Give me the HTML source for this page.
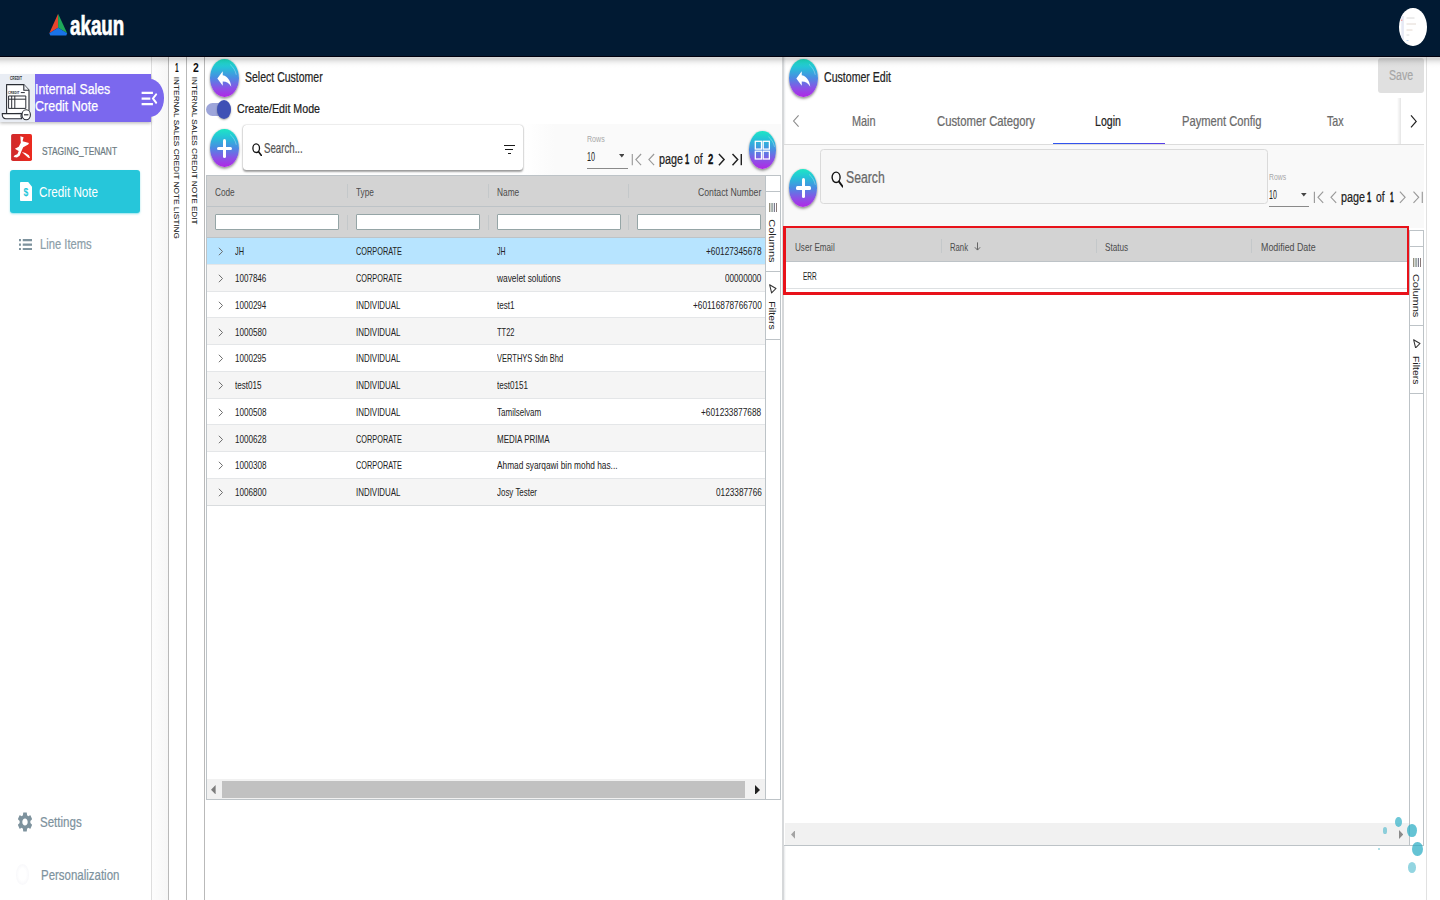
<!DOCTYPE html>
<html lang="en"><head><meta charset="utf-8"><title>akaun - Internal Sales Credit Note</title>
<style>
html,body{margin:0;padding:0;}
body{width:1440px;height:900px;overflow:hidden;background:#fff;position:relative;
 font-family:"Liberation Sans",sans-serif;}
#app{position:absolute;left:0;top:0;width:1440px;height:900px;overflow:hidden;}
#app div,#app svg,#app span.t{position:absolute;}
span.t{white-space:nowrap;line-height:1;transform-origin:0 0;display:block;}
</style></head><body><div id="app">

<div style="left:151.5px;top:56px;width:17px;height:844px;background:linear-gradient(90deg,#fdfdfd,#f6f6f6);"></div>
<div style="left:151.2px;top:56px;width:1px;height:844px;background:#dedede;"></div>
<div style="left:168px;top:56px;width:1.1px;height:844px;background:#b9b9b9;"></div>
<div style="left:186px;top:56px;width:1.1px;height:844px;background:#b9b9b9;"></div>
<div style="left:204.2px;top:56px;width:1.1px;height:844px;background:#b9b9b9;"></div>
<div style="left:781.8px;top:56px;width:2.6px;height:844px;background:#d6d8da;"></div>
<div style="left:784.3px;top:56px;width:1.5px;height:844px;background:linear-gradient(90deg,#e8eaec,#fff);"></div>
<div style="left:1425.5px;top:56px;width:1.7px;height:844px;background:#e1e1e1;"></div>
<div style="left:0px;top:74.3px;width:34.5px;height:47.9px;background:#e9edf4;"></div>
<div style="left:34.5px;top:74.3px;width:116.3px;height:47.9px;background:#7b68ee;box-shadow:0 1.5px 3px rgba(0,0,0,.25);"></div>
<div style="left:0px;top:74.3px;width:34.5px;height:47.9px;background:#e9edf4;box-shadow:0 1.5px 3px rgba(0,0,0,.25);"></div>
<div style="left:135.8px;top:79.3px;width:28px;height:37.4px;background:#7b68ee;border-radius:50%;"></div>
<div style="left:34.5px;top:74.3px;width:116.3px;height:47.9px;background:#7b68ee;"></div>
<span class="t" style="left:34.8px;top:81px;font-size:14.75px;line-height:16px;color:#fff;transform:scaleX(0.8337);-webkit-text-stroke:.25px #fff;">Internal Sales</span>
<span class="t" style="left:34.8px;top:98px;font-size:14.75px;line-height:16px;color:#fff;transform:scaleX(0.8471);-webkit-text-stroke:.25px #fff;">Credit Note</span>
<svg style="left:139.4px;top:84.9px;" width="20.9" height="27.1" viewBox="0 0 24 24" preserveAspectRatio="none"><path fill="#fff" d="M3 18h13v-2H3v2zm0-5h10v-2H3v2zm0-7v2h13V6H3zm18 9.59L17.42 12 21 8.41 19.59 7l-5 5 5 5L21 15.59z"/></svg>
<svg style="left:0px;top:74.3px;" width="34.5" height="47.9" viewBox="0 0 34.5 47.9" preserveAspectRatio="none">
<g fill="none" stroke="#2a2d34" stroke-width="1.1" stroke-linejoin="round">
<path d="M6.6 40V10.6h17.2l5.2 5.6v20.6" fill="#fff"/>
<path d="M23.8 10.6v5.6H29" fill="#eef1f6"/>
<path d="M2.2 39.6h19.4c-.9 1.7-.9 3.5 0 5.2H5.8c-2.4 0-3.6-2.6-3.6-5.2z" fill="#fff"/>
<path d="M8.6 22h17.2v12.4H8.6zM8.6 25.2h17.2M11.7 22v12.4M14.8 22v12.4" stroke-width="1"/>
<ellipse cx="26.2" cy="40.8" rx="4.2" ry="5" fill="#fff"/>
<path d="M24 40.8h4.4" stroke-width="1.2"/>
</g>
<text x="10" y="6" font-size="4.6" font-weight="700" fill="#2a2d34" textLength="12" lengthAdjust="spacingAndGlyphs">CREDIT</text>
<text x="8" y="19.6" font-size="4.4" font-weight="700" fill="#2a2d34" textLength="11.4" lengthAdjust="spacingAndGlyphs">CREDIT</text>
<path d="M20.8 18.6h4" stroke="#2a2d34" stroke-width="1"/>
</svg>
<svg style="left:4px;top:128px;" width="40" height="40" viewBox="0 0 900 900" preserveAspectRatio="none">
<defs><linearGradient id="rg" x1="0" x2="1" y1="0" y2="0"><stop offset="0" stop-color="#cf2a2c"/><stop offset="1" stop-color="#ec2a1e"/></linearGradient></defs>
<rect x="160" y="135" width="470" height="610" rx="40" ry="40" fill="url(#rg)"/>
<path fill="#fff" d="M368 185 L440 208 L418 300 L562 338 L545 372 L432 432 L392 522 L352 622 L292 662 L215 650 L240 612 L300 590 L332 520 L300 500 L245 468 L332 420 L378 330 Z"/>
<path fill="#fff" d="M402 540 L482 560 L560 612 L586 676 L545 670 L470 600 Z"/>
</svg>
<span class="t" style="left:41.7px;top:144px;font-size:11.75px;line-height:13px;color:#6c7a82;transform:scaleX(0.7106);-webkit-text-stroke:0.22px;">STAGING_TENANT</span>
<div style="left:10px;top:170.3px;width:129.7px;height:42.7px;background:#26c6da;border-radius:3px;box-shadow:0 1px 2px rgba(38,198,218,.5);"></div>
<svg style="left:19.6px;top:182px;" width="12.2" height="18.9" viewBox="0 0 12.2 18.9" preserveAspectRatio="none">
<path fill="#fff" d="M.9 0H8.200L12.200 5.100V18a.9.9 0 0 1-.9.900H.900A.9.900 0 0 1 0 18V.900A.9.900 0 0 1 .900 0z"/>
<text x="3.600" y="14.100" font-size="10.500" font-weight="700" fill="#26c6da" font-family="Liberation Sans, sans-serif" textLength="4.800" lengthAdjust="spacingAndGlyphs">$</text>
</svg>
<span class="t" style="left:39.2px;top:184px;font-size:14.25px;line-height:16px;color:#fff;transform:scaleX(0.8200);">Credit Note</span>
<svg style="left:18.7px;top:238.7px;" width="13.5" height="11.3" viewBox="0 0 18 12" preserveAspectRatio="none">
<g fill="#7d929d"><rect x="0" y="0" width="2.6" height="2.4"/><rect x="0" y="4.8" width="2.6" height="2.4"/><rect x="0" y="9.6" width="2.6" height="2.4"/>
<rect x="5" y="0" width="13" height="2.4"/><rect x="5" y="4.8" width="13" height="2.4"/><rect x="5" y="9.6" width="13" height="2.4"/></g></svg>
<span class="t" style="left:39.5px;top:236px;font-size:14.75px;line-height:16px;color:#8c9ea8;transform:scaleX(0.7598);-webkit-text-stroke:0.22px;">Line Items</span>
<svg style="left:16.4px;top:809.9px;" width="18" height="24" viewBox="0 0 24 24" preserveAspectRatio="none"><path fill="#7d929d" d="M19.14 12.94c.04-.3.06-.61.06-.94 0-.32-.02-.64-.07-.94l2.03-1.58c.18-.14.23-.41.12-.61l-1.92-3.32c-.12-.22-.37-.29-.59-.22l-2.39.96c-.5-.38-1.030-.7-1.620-.94l-.36-2.540c-.04-.24-.24-.41-.48-.41h-3.840c-.24 0-.43.17-.47.41l-.36 2.540c-.59.24-1.130.57-1.620.94l-2.390-.96c-.22-.08-.47 0-.59.22L2.740 8.870c-.12.21-.08.47.12.61l2.030 1.580c-.05.3-.09.63-.09.94s.02.64.07.94l-2.030 1.580c-.18.14-.23.41-.12.61l1.920 3.320c.12.22.37.29.59.22l2.390-.96c.5.38 1.030.7 1.620.94l.36 2.540c.05.24.24.41.48.41h3.840c.24 0 .44-.17.47-.41l.36-2.540c.59-.24 1.130-.56 1.620-.94l2.390.96c.22.08.47 0 .59-.22l1.920-3.320c.12-.22.070-.47-.12-.61l-2.010-1.580zM12 15.600c-1.980 0-3.600-1.620-3.600-3.600s1.620-3.600 3.600-3.600 3.600 1.620 3.600 3.600-1.620 3.600-3.600 3.600z"/></svg>
<span class="t" style="left:39.5px;top:813px;font-size:15px;line-height:17px;color:#7d929d;transform:scaleX(0.7694);-webkit-text-stroke:0.22px;">Settings</span>
<div style="left:15.8px;top:864px;width:13.2px;height:21px;border-radius:50%;background:radial-gradient(ellipse at center,#fff 40%,#f1f1f6 100%);"></div>
<span class="t" style="left:40.8px;top:866px;font-size:15px;line-height:17px;color:#7d929d;transform:scaleX(0.7645);-webkit-text-stroke:0.22px;">Personalization</span>
<span class="t" style="left:175px;top:60px;font-size:12.75px;line-height:15px;color:#111;font-weight:700;transform:scaleX(0.5219);">1</span>
<span class="t" style="left:192.5px;top:60px;font-size:12.75px;line-height:15px;color:#111;font-weight:700;transform:scaleX(0.8182);">2</span>
<span class="t" style="left:0;top:0;font-size:11px;color:#1c1c1c;transform:translate(173.7px,76.8px) rotate(90deg) scale(0.7517,0.7267) translate(-0px,-9.32px);-webkit-text-stroke:.1px;">INTERNAL SALES CREDIT NOTE LISTING</span>
<span class="t" style="left:0;top:0;font-size:11px;color:#1c1c1c;transform:translate(191.7px,76.8px) rotate(90deg) scale(0.7463,0.7267) translate(-0px,-9.32px);-webkit-text-stroke:.1px;">INTERNAL SALES CREDIT NOTE EDIT</span>
<div style="left:210.4px;top:59px;width:28.4px;height:38px;border-radius:50%;background:linear-gradient(180deg,#1ee6c4 0%,#25c3d8 22%,#4a8be2 50%,#8a52e6 76%,#b028e6 100%);box-shadow:0 2px 2.5px rgba(0,0,0,.35),0 0 2px rgba(0,0,0,.2);"></div>
<svg style="left:210.4px;top:59px" width="28.4" height="38" viewBox="0 0 28.4 38"><path d="M20.300 5.600C23.400 8.200 25.400 11.600 26.200 15.400" fill="none" stroke="rgba(255,255,255,.38)" stroke-width=".8" stroke-linecap="round"/></svg>
<svg style="left:215.2px;top:65.6px;" width="18.6" height="24.8" viewBox="0 0 24 24" preserveAspectRatio="none"><path fill="#fff" d="M10 9V5l-7 7 7 7v-4.100c5 0 8.500 1.600 11 5.100-1-5-4-10-11-11z"/></svg>
<span class="t" style="left:245.3px;top:69px;font-size:14.5px;line-height:16px;color:#222;transform:scaleX(0.7249);-webkit-text-stroke:0.22px;">Select Customer</span>
<div style="left:205.8px;top:103.3px;width:24.8px;height:12.9px;background:#9da5da;border-radius:7px/7px;"></div>
<div style="left:217px;top:100px;width:14.3px;height:19.4px;background:#3f51b5;border-radius:50%;box-shadow:0 1px 2px rgba(0,0,0,.35);"></div>
<span class="t" style="left:237px;top:101px;font-size:13.25px;line-height:15px;color:#1b1b1b;transform:scaleX(0.8050);-webkit-text-stroke:0.22px;">Create/Edit Mode</span>
<div style="left:524px;top:124px;width:257.2px;height:51px;background:linear-gradient(90deg,#fff,#fafafa 12%);"></div>
<div style="left:210.4px;top:129.4px;width:28.4px;height:38px;border-radius:50%;background:linear-gradient(180deg,#1ee6c4 0%,#25c3d8 22%,#4a8be2 50%,#8a52e6 76%,#b028e6 100%);box-shadow:0 2px 2.5px rgba(0,0,0,.35),0 0 2px rgba(0,0,0,.2);"></div>
<svg style="left:210.4px;top:129.4px" width="28.4" height="38" viewBox="0 0 28.4 38"><path d="M20.300 5.600C23.400 8.200 25.400 11.600 26.200 15.400" fill="none" stroke="rgba(255,255,255,.38)" stroke-width=".8" stroke-linecap="round"/></svg>
<div style="left:216.9px;top:146.8px;width:15.1px;height:3.4px;background:#fff;border-radius:1.5px;"></div>
<div style="left:222.9px;top:138.7px;width:3.1px;height:19.3px;background:#fff;border-radius:1.5px;"></div>
<div style="left:242.8px;top:125.2px;width:280.5px;height:44.6px;background:#fff;border-radius:3.5px;box-shadow:0 1.2px 2px rgba(0,0,0,.36),0 0 1.5px rgba(0,0,0,.28);"></div>
<svg style="left:251.7px;top:142.6px;" width="10.5" height="13.8" viewBox="0 0 10.5 13.8" preserveAspectRatio="none"><ellipse cx="4.2" cy="5.2" rx="3.3" ry="4.3" fill="none" stroke="#111" stroke-width="1.3"/><path d="M6.4 8.600L9.800 13" stroke="#111" stroke-width="1.6" stroke-linecap="round"/></svg>
<span class="t" style="left:263.8px;top:141px;font-size:13.75px;line-height:15px;color:#555;transform:scaleX(0.7033);-webkit-text-stroke:0.22px;">Search...</span>
<div style="left:503.9px;top:144.9px;width:11.1px;height:1.3px;background:#1a1a1a;"></div>
<div style="left:505.3px;top:148.9px;width:7.7px;height:1.3px;background:#1a1a1a;"></div>
<div style="left:507.9px;top:152.9px;width:3.1px;height:1.3px;background:#1a1a1a;"></div>
<span class="t" style="left:587px;top:134px;font-size:9px;line-height:10px;color:#a8a8a8;transform:scaleX(0.7864);">Rows</span>
<span class="t" style="left:587.4px;top:149px;font-size:13.5px;line-height:15px;color:#222;transform:scaleX(0.5329);">10</span>
<svg style="left:618.7px;top:154.3px;" width="5.6" height="3.5" viewBox="0 0 10 5" preserveAspectRatio="none"><path d="M0 0h10L5 5z" fill="#444"/></svg>
<div style="left:587px;top:168px;width:40.5px;height:1px;background:#8a8a8a;"></div>
<svg style="left:0;top:0" width="1440" height="900" viewBox="0 0 1440 900"><path d="M632.3 154V165.2" stroke="#9a9a9a" stroke-width="1.15"/><polyline points="641.1,154 635.9,159.6 641.1,165.2" fill="none" stroke="#9a9a9a" stroke-width="1.15"/><polyline points="654.1,154 648.9,159.6 654.1,165.2" fill="none" stroke="#9a9a9a" stroke-width="1.15"/><polyline points="718.9,154 724.1,159.6 718.9,165.2" fill="none" stroke="#222" stroke-width="1.45"/><polyline points="732.5,154 737.7,159.6 732.5,165.2" fill="none" stroke="#222" stroke-width="1.45"/><path d="M741.3 154V165.2" stroke="#222" stroke-width="1.45"/></svg>
<span class="t" style="left:658.8px;top:151px;font-size:14.75px;line-height:16px;color:#222;transform:scaleX(0.7313);-webkit-text-stroke:0.22px;">page</span>
<span class="t" style="left:685.1px;top:150px;font-size:15.5px;line-height:17px;color:#111;font-weight:700;transform:scaleX(0.4874);-webkit-text-stroke:0.35px;">1</span>
<span class="t" style="left:694.2px;top:151px;font-size:14.75px;line-height:16px;color:#222;transform:scaleX(0.6974);-webkit-text-stroke:0.22px;">of</span>
<span class="t" style="left:707.5px;top:150px;font-size:15.5px;line-height:17px;color:#111;font-weight:700;transform:scaleX(0.6150);-webkit-text-stroke:0.3px;">2</span>
<div style="left:748.5px;top:131.1px;width:27.6px;height:38px;border-radius:50%;background:linear-gradient(180deg,#1ee6c4 0%,#25c3d8 22%,#4a8be2 50%,#8a52e6 76%,#b028e6 100%);box-shadow:0 2px 2.5px rgba(0,0,0,.35),0 0 2px rgba(0,0,0,.2);"></div>
<svg style="left:748.5px;top:131.1px" width="27.6" height="38" viewBox="0 0 28.4 38"><path d="M20.300 5.600C23.400 8.200 25.400 11.600 26.200 15.400" fill="none" stroke="rgba(255,255,255,.38)" stroke-width=".8" stroke-linecap="round"/></svg>
<svg style="left:754.2px;top:140.4px;" width="16.2" height="20.3" viewBox="0 0 16.2 20.3" preserveAspectRatio="none"><g fill="none" stroke="#fff" stroke-width="1.3"><rect x="1.3" y="1.3" width="6.2" height="7.8"/><rect x="9.2" y="1.3" width="6.2" height="7.8"/><rect x="1.300" y="11.2" width="6.2" height="7.8"/><rect x="9.2" y="11.2" width="6.2" height="7.8"/></g></svg>
<div style="left:205.8px;top:174.6px;width:575px;height:625.8px;background:#fff;border:1px solid #bdc3c7;box-sizing:border-box;"></div>
<div style="left:206.8px;top:175.5px;width:558.8px;height:61.9px;background:#d3d3d3;"></div>
<div style="left:206.8px;top:205.6px;width:558.8px;height:1px;background:#bdc3c7;"></div>
<div style="left:206.8px;top:236.6px;width:558.8px;height:1px;background:#bdc3c7;"></div>
<div style="left:765.2px;top:175px;width:1px;height:625px;background:#bdc3c7;"></div>
<div style="left:347px;top:184.2px;width:1px;height:14.2px;background:#c4c8ca;"></div>
<div style="left:347px;top:215.4px;width:1px;height:14.2px;background:#c4c8ca;"></div>
<div style="left:487.5px;top:184.2px;width:1px;height:14.2px;background:#c4c8ca;"></div>
<div style="left:487.5px;top:215.4px;width:1px;height:14.2px;background:#c4c8ca;"></div>
<div style="left:628px;top:184.2px;width:1px;height:14.2px;background:#c4c8ca;"></div>
<div style="left:628px;top:215.4px;width:1px;height:14.2px;background:#c4c8ca;"></div>
<span class="t" style="left:215.3px;top:186px;font-size:11.5px;line-height:12px;color:#4c4c4c;transform:scaleX(0.7165);">Code</span>
<span class="t" style="left:356.3px;top:186px;font-size:11.5px;line-height:12px;color:#4c4c4c;transform:scaleX(0.7180);">Type</span>
<span class="t" style="left:497px;top:186px;font-size:11.5px;line-height:12px;color:#4c4c4c;transform:scaleX(0.7236);">Name</span>
<span class="t" style="left:698px;top:186px;font-size:11.5px;line-height:12px;color:#4c4c4c;transform:scaleX(0.7560);">Contact Number</span>
<div style="left:215.3px;top:214.2px;width:123.9px;height:16.2px;background:#fff;border:1px solid #95a5a6;box-sizing:border-box;border-radius:1px;"></div>
<div style="left:355.8px;top:214.2px;width:124.2px;height:16.2px;background:#fff;border:1px solid #95a5a6;box-sizing:border-box;border-radius:1px;"></div>
<div style="left:496.8px;top:214.2px;width:123.9px;height:16.2px;background:#fff;border:1px solid #95a5a6;box-sizing:border-box;border-radius:1px;"></div>
<div style="left:637.2px;top:214.2px;width:124.1px;height:16.2px;background:#fff;border:1px solid #95a5a6;box-sizing:border-box;border-radius:1px;"></div>
<div style="left:206.8px;top:237.5px;width:558.4px;height:26.78px;background:#b7e4ff;"></div>
<svg style="left:218.3px;top:247.1px" width="6" height="9" viewBox="0 0 6 9"><polyline points="0.9,0.800 4.5,4.500 0.9,8.200" fill="none" stroke="#666" stroke-width="0.95"/></svg>
<span class="t" style="left:234.7px;top:245px;font-size:11.5px;line-height:12px;color:#222;transform:scaleX(0.6404);">JH</span>
<span class="t" style="left:356.3px;top:245px;font-size:11.5px;line-height:12px;color:#222;transform:scaleX(0.6376);">CORPORATE</span>
<span class="t" style="left:497px;top:245px;font-size:11.5px;line-height:12px;color:#222;transform:scaleX(0.6049);">JH</span>
<span class="t" style="left:705.8px;top:245px;font-size:11.5px;line-height:12px;color:#222;transform:scaleX(0.7201);">+60127345678</span>
<div style="left:206.8px;top:264.28px;width:558.4px;height:26.78px;background:#f5f5f5;"></div>
<div style="left:206.8px;top:263.78px;width:558.4px;height:1px;background:#e4e6e8;"></div>
<svg style="left:218.3px;top:274.1px" width="6" height="9" viewBox="0 0 6 9"><polyline points="0.9,0.800 4.5,4.500 0.9,8.200" fill="none" stroke="#666" stroke-width="0.95"/></svg>
<span class="t" style="left:235.4px;top:272px;font-size:11.5px;line-height:12px;color:#222;transform:scaleX(0.6991);">1007846</span>
<span class="t" style="left:356.3px;top:272px;font-size:11.5px;line-height:12px;color:#222;transform:scaleX(0.6376);">CORPORATE</span>
<span class="t" style="left:497.02px;top:272px;font-size:11.5px;line-height:12px;color:#222;transform:scaleX(0.7272);">wavelet solutions</span>
<span class="t" style="left:725px;top:272px;font-size:11.5px;line-height:12px;color:#222;transform:scaleX(0.7095);">00000000</span>
<div style="left:206.8px;top:291.06px;width:558.4px;height:26.78px;background:#fff;"></div>
<div style="left:206.8px;top:290.56px;width:558.4px;height:1px;background:#e4e6e8;"></div>
<svg style="left:218.3px;top:301.1px" width="6" height="9" viewBox="0 0 6 9"><polyline points="0.9,0.800 4.5,4.500 0.9,8.200" fill="none" stroke="#666" stroke-width="0.95"/></svg>
<span class="t" style="left:235.4px;top:299px;font-size:11.5px;line-height:12px;color:#222;transform:scaleX(0.6991);">1000294</span>
<span class="t" style="left:356.3px;top:299px;font-size:11.5px;line-height:12px;color:#222;transform:scaleX(0.6895);">INDIVIDUAL</span>
<span class="t" style="left:497px;top:299px;font-size:11.5px;line-height:12px;color:#222;transform:scaleX(0.7019);">test1</span>
<span class="t" style="left:692.5px;top:299px;font-size:11.5px;line-height:12px;color:#222;transform:scaleX(0.7211);">+60116878766700</span>
<div style="left:206.8px;top:317.84px;width:558.4px;height:26.78px;background:#f5f5f5;"></div>
<div style="left:206.8px;top:317.34px;width:558.4px;height:1px;background:#e4e6e8;"></div>
<svg style="left:218.3px;top:328.1px" width="6" height="9" viewBox="0 0 6 9"><polyline points="0.9,0.800 4.5,4.500 0.9,8.200" fill="none" stroke="#666" stroke-width="0.95"/></svg>
<span class="t" style="left:235.4px;top:326px;font-size:11.5px;line-height:12px;color:#222;transform:scaleX(0.7058);">1000580</span>
<span class="t" style="left:356.3px;top:326px;font-size:11.5px;line-height:12px;color:#222;transform:scaleX(0.6895);">INDIVIDUAL</span>
<span class="t" style="left:497px;top:326px;font-size:11.5px;line-height:12px;color:#222;transform:scaleX(0.6520);">TT22</span>
<div style="left:206.8px;top:344.62px;width:558.4px;height:26.78px;background:#fff;"></div>
<div style="left:206.8px;top:344.12px;width:558.4px;height:1px;background:#e4e6e8;"></div>
<svg style="left:218.3px;top:354.1px" width="6" height="9" viewBox="0 0 6 9"><polyline points="0.9,0.800 4.5,4.500 0.9,8.200" fill="none" stroke="#666" stroke-width="0.95"/></svg>
<span class="t" style="left:235.4px;top:352px;font-size:11.5px;line-height:12px;color:#222;transform:scaleX(0.6991);">1000295</span>
<span class="t" style="left:356.3px;top:352px;font-size:11.5px;line-height:12px;color:#222;transform:scaleX(0.6895);">INDIVIDUAL</span>
<span class="t" style="left:497px;top:352px;font-size:11.5px;line-height:12px;color:#222;transform:scaleX(0.6527);">VERTHYS Sdn Bhd</span>
<div style="left:206.8px;top:371.4px;width:558.4px;height:26.78px;background:#f5f5f5;"></div>
<div style="left:206.8px;top:370.9px;width:558.4px;height:1px;background:#e4e6e8;"></div>
<svg style="left:218.3px;top:381.1px" width="6" height="9" viewBox="0 0 6 9"><polyline points="0.9,0.800 4.5,4.500 0.9,8.200" fill="none" stroke="#666" stroke-width="0.95"/></svg>
<span class="t" style="left:235.4px;top:379px;font-size:11.5px;line-height:12px;color:#222;transform:scaleX(0.7052);">test015</span>
<span class="t" style="left:356.3px;top:379px;font-size:11.5px;line-height:12px;color:#222;transform:scaleX(0.6895);">INDIVIDUAL</span>
<span class="t" style="left:497px;top:379px;font-size:11.5px;line-height:12px;color:#222;transform:scaleX(0.7027);">test0151</span>
<div style="left:206.8px;top:398.18px;width:558.4px;height:26.78px;background:#fff;"></div>
<div style="left:206.8px;top:397.68px;width:558.4px;height:1px;background:#e4e6e8;"></div>
<svg style="left:218.3px;top:408.1px" width="6" height="9" viewBox="0 0 6 9"><polyline points="0.9,0.800 4.5,4.500 0.9,8.200" fill="none" stroke="#666" stroke-width="0.95"/></svg>
<span class="t" style="left:235.4px;top:406px;font-size:11.5px;line-height:12px;color:#222;transform:scaleX(0.7058);">1000508</span>
<span class="t" style="left:356.3px;top:406px;font-size:11.5px;line-height:12px;color:#222;transform:scaleX(0.6895);">INDIVIDUAL</span>
<span class="t" style="left:497px;top:406px;font-size:11.5px;line-height:12px;color:#222;transform:scaleX(0.6987);">Tamilselvam</span>
<span class="t" style="left:701.2px;top:406px;font-size:11.5px;line-height:12px;color:#222;transform:scaleX(0.7200);">+601233877688</span>
<div style="left:206.8px;top:424.96px;width:558.4px;height:26.78px;background:#f5f5f5;"></div>
<div style="left:206.8px;top:424.46px;width:558.4px;height:1px;background:#e4e6e8;"></div>
<svg style="left:218.3px;top:435.1px" width="6" height="9" viewBox="0 0 6 9"><polyline points="0.9,0.800 4.5,4.500 0.9,8.200" fill="none" stroke="#666" stroke-width="0.95"/></svg>
<span class="t" style="left:235.4px;top:433px;font-size:11.5px;line-height:12px;color:#222;transform:scaleX(0.7058);">1000628</span>
<span class="t" style="left:356.3px;top:433px;font-size:11.5px;line-height:12px;color:#222;transform:scaleX(0.6376);">CORPORATE</span>
<span class="t" style="left:497px;top:433px;font-size:11.5px;line-height:12px;color:#222;transform:scaleX(0.6962);">MEDIA PRIMA</span>
<div style="left:206.8px;top:451.74px;width:558.4px;height:26.78px;background:#fff;"></div>
<div style="left:206.8px;top:451.24px;width:558.4px;height:1px;background:#e4e6e8;"></div>
<svg style="left:218.3px;top:461.1px" width="6" height="9" viewBox="0 0 6 9"><polyline points="0.9,0.800 4.5,4.500 0.9,8.200" fill="none" stroke="#666" stroke-width="0.95"/></svg>
<span class="t" style="left:235.4px;top:459px;font-size:11.5px;line-height:12px;color:#222;transform:scaleX(0.7058);">1000308</span>
<span class="t" style="left:356.3px;top:459px;font-size:11.5px;line-height:12px;color:#222;transform:scaleX(0.6376);">CORPORATE</span>
<span class="t" style="left:497px;top:459px;font-size:11.5px;line-height:12px;color:#222;transform:scaleX(0.7223);">Ahmad syarqawi bin mohd has...</span>
<div style="left:206.8px;top:478.52px;width:558.4px;height:26.78px;background:#f5f5f5;"></div>
<div style="left:206.8px;top:478.02px;width:558.4px;height:1px;background:#e4e6e8;"></div>
<svg style="left:218.3px;top:488.1px" width="6" height="9" viewBox="0 0 6 9"><polyline points="0.9,0.800 4.5,4.500 0.9,8.200" fill="none" stroke="#666" stroke-width="0.95"/></svg>
<span class="t" style="left:235.4px;top:486px;font-size:11.5px;line-height:12px;color:#222;transform:scaleX(0.7058);">1006800</span>
<span class="t" style="left:356.3px;top:486px;font-size:11.5px;line-height:12px;color:#222;transform:scaleX(0.6895);">INDIVIDUAL</span>
<span class="t" style="left:497px;top:486px;font-size:11.5px;line-height:12px;color:#222;transform:scaleX(0.6903);">Josy Tester</span>
<span class="t" style="left:715.5px;top:486px;font-size:11.5px;line-height:12px;color:#222;transform:scaleX(0.7160);">0123387766</span>
<div style="left:206.8px;top:504.8px;width:558.4px;height:1.1px;background:#d9dcde;"></div>
<div style="left:206.8px;top:779.4px;width:558.4px;height:20px;background:#f1f1f1;"></div>
<div style="left:222.4px;top:781px;width:522.2px;height:16.6px;background:#c1c1c1;"></div>
<svg style="left:211px;top:784.8px;" width="4.6" height="9.4" viewBox="0 0 5 10" preserveAspectRatio="none"><path d="M5 0v10L0 5z" fill="#7c7c7c"/></svg>
<svg style="left:754.6px;top:784.6px;" width="5" height="9.8" viewBox="0 0 5 10" preserveAspectRatio="none"><path d="M0 0v10l5-5z" fill="#222"/></svg>
<div style="left:765.6px;top:191.1px;width:15px;height:1px;background:#bdc3c7;"></div>
<div style="left:765.6px;top:270.7px;width:15px;height:1px;background:#bdc3c7;"></div>
<div style="left:765.6px;top:338.7px;width:15px;height:1px;background:#bdc3c7;"></div>
<svg style="left:768.6px;top:203.2px;" width="8.4" height="9" viewBox="0 0 8.4 9" preserveAspectRatio="none"><g><rect x="0.2" y="0" width="1.1" height="9" fill="#7c7660"/><rect x="2.5" y="0" width="1.1" height="9" fill="#667a74"/><rect x="4.800" y="0" width="1.100" height="9" fill="#6c6c80"/><rect x="7.100" y="0" width="1.100" height="9" fill="#7c6c6c"/></g></svg>
<span class="t" style="left:0;top:0;font-size:11px;color:#222;transform:translate(768.85px,219.2px) rotate(90deg) scale(0.9999,0.8325) translate(-0px,-9.32px);">Columns</span>
<svg style="left:769px;top:283.8px;" width="7.6" height="9.8" viewBox="0 0 7.6 9.8" preserveAspectRatio="none"><path d="M0.600 0.700L7 4.500L2.600 8.900Z" fill="none" stroke="#333" stroke-width="1.05" stroke-linejoin="round"/></svg>
<span class="t" style="left:0;top:0;font-size:11px;color:#222;transform:translate(768.85px,301.2px) rotate(90deg) scale(0.9552,0.8325) translate(-0px,-9.32px);">Filters</span>
<div style="left:789.2px;top:59px;width:28.4px;height:38px;border-radius:50%;background:linear-gradient(180deg,#1ee6c4 0%,#25c3d8 22%,#4a8be2 50%,#8a52e6 76%,#b028e6 100%);box-shadow:0 2px 2.5px rgba(0,0,0,.35),0 0 2px rgba(0,0,0,.2);"></div>
<svg style="left:789.2px;top:59px" width="28.4" height="38" viewBox="0 0 28.4 38"><path d="M20.300 5.600C23.400 8.200 25.400 11.600 26.200 15.400" fill="none" stroke="rgba(255,255,255,.38)" stroke-width=".8" stroke-linecap="round"/></svg>
<svg style="left:794px;top:65.6px;" width="18.6" height="24.8" viewBox="0 0 24 24" preserveAspectRatio="none"><path fill="#fff" d="M10 9V5l-7 7 7 7v-4.100c5 0 8.500 1.600 11 5.100-1-5-4-10-11-11z"/></svg>
<span class="t" style="left:823.8px;top:69px;font-size:14.5px;line-height:16px;color:#222;transform:scaleX(0.7294);-webkit-text-stroke:0.22px;">Customer Edit</span>
<div style="left:1378px;top:58px;width:45.8px;height:34.7px;background:#e0e0e0;border-radius:3px;"></div>
<span class="t" style="left:1389.2px;top:67px;font-size:14px;line-height:16px;color:#a6a6a6;transform:scaleX(0.7553);-webkit-text-stroke:0.22px;">Save</span>
<svg style="left:0;top:0" width="1440" height="900" viewBox="0 0 1440 900"><polyline points="798.6,115.4 793.6,121 798.6,126.600" fill="none" stroke="#8a8a8a" stroke-width="1.1"/><polyline points="1411,115.4 1416.2,121.4 1411,127.400" fill="none" stroke="#222" stroke-width="1.2"/></svg>
<span class="t" style="left:851.7px;top:114px;font-size:13.75px;line-height:15px;color:#6a6a6a;transform:scaleX(0.7917);-webkit-text-stroke:0.22px;">Main</span>
<span class="t" style="left:936.7px;top:114px;font-size:13.75px;line-height:15px;color:#6a6a6a;transform:scaleX(0.8221);-webkit-text-stroke:0.22px;">Customer Category</span>
<span class="t" style="left:1095.3px;top:114px;font-size:13.75px;line-height:15px;color:#222;transform:scaleX(0.7698);-webkit-text-stroke:0.22px;">Login</span>
<span class="t" style="left:1181.7px;top:114px;font-size:13.75px;line-height:15px;color:#6a6a6a;transform:scaleX(0.8126);-webkit-text-stroke:0.22px;">Payment Config</span>
<span class="t" style="left:1326.7px;top:114px;font-size:13.75px;line-height:15px;color:#6a6a6a;transform:scaleX(0.7759);-webkit-text-stroke:0.22px;">Tax</span>
<div style="left:1396.5px;top:98px;width:4.5px;height:46px;background:linear-gradient(90deg,rgba(0,0,0,0),rgba(0,0,0,.10));"></div>
<div style="left:784.2px;top:143.6px;width:640.2px;height:1px;background:#dcdcdc;"></div>
<div style="left:1052.8px;top:142.5px;width:112.2px;height:1.7px;background:linear-gradient(90deg,#2f55f0,#3f4fe8 70%,#5a3fe8);"></div>
<div style="left:784.2px;top:144.6px;width:640.2px;height:83.4px;background:#f9f9f9;"></div>
<div style="left:820.3px;top:149.2px;width:448.1px;height:55.3px;background:#f7f7f7;border:1px solid #dadada;border-radius:3.5px;box-sizing:border-box;"></div>
<div style="left:789.1px;top:168.6px;width:28.4px;height:38px;border-radius:50%;background:linear-gradient(180deg,#1ee6c4 0%,#25c3d8 22%,#4a8be2 50%,#8a52e6 76%,#b028e6 100%);box-shadow:0 2px 2.5px rgba(0,0,0,.35),0 0 2px rgba(0,0,0,.2);"></div>
<svg style="left:789.1px;top:168.6px" width="28.4" height="38" viewBox="0 0 28.4 38"><path d="M20.300 5.600C23.400 8.200 25.400 11.600 26.200 15.400" fill="none" stroke="rgba(255,255,255,.38)" stroke-width=".8" stroke-linecap="round"/></svg>
<div style="left:796px;top:186.2px;width:14.7px;height:3.4px;background:#fff;border-radius:1.5px;"></div>
<div style="left:801.9px;top:178px;width:3.1px;height:19.8px;background:#fff;border-radius:1.5px;"></div>
<svg style="left:830.5px;top:171px;" width="12.7" height="16.8" viewBox="0 0 12.7 16.8" preserveAspectRatio="none"><ellipse cx="5.100" cy="6.300" rx="4" ry="5.200" fill="none" stroke="#111" stroke-width="1.400"/><path d="M7.800 10.400L11.800 15.800" stroke="#111" stroke-width="1.800" stroke-linecap="round"/></svg>
<span class="t" style="left:845.5px;top:168px;font-size:16.25px;line-height:18px;color:#666;transform:scaleX(0.7517);-webkit-text-stroke:0.22px;">Search</span>
<span class="t" style="left:1269.2px;top:172px;font-size:9px;line-height:10px;color:#a8a8a8;transform:scaleX(0.7597);">Rows</span>
<span class="t" style="left:1269.4px;top:187px;font-size:13.5px;line-height:15px;color:#222;transform:scaleX(0.5196);">10</span>
<svg style="left:1301.3px;top:193px;" width="5.6" height="3.5" viewBox="0 0 10 5" preserveAspectRatio="none"><path d="M0 0h10L5 5z" fill="#444"/></svg>
<div style="left:1269.2px;top:205.8px;width:40px;height:1px;background:#8a8a8a;"></div>
<svg style="left:0;top:0" width="1440" height="900" viewBox="0 0 1440 900"><path d="M1314.4 191.7V202.9" stroke="#9a9a9a" stroke-width="1.15"/><polyline points="1323.2,191.7 1318,197.3 1323.2,202.9" fill="none" stroke="#9a9a9a" stroke-width="1.15"/><polyline points="1336.2,191.7 1331,197.3 1336.2,202.9" fill="none" stroke="#9a9a9a" stroke-width="1.15"/><polyline points="1399.9,191.7 1405.1,197.3 1399.9,202.9" fill="none" stroke="#9a9a9a" stroke-width="1.15"/><polyline points="1413.5,191.7 1418.7,197.3 1413.5,202.9" fill="none" stroke="#9a9a9a" stroke-width="1.15"/><path d="M1422.3 191.7V202.9" stroke="#9a9a9a" stroke-width="1.15"/></svg>
<span class="t" style="left:1340.9px;top:189px;font-size:14.75px;line-height:16px;color:#222;transform:scaleX(0.7313);-webkit-text-stroke:0.22px;">page</span>
<span class="t" style="left:1367.2px;top:188px;font-size:15.5px;line-height:17px;color:#111;font-weight:700;transform:scaleX(0.4874);-webkit-text-stroke:0.35px;">1</span>
<span class="t" style="left:1376.3px;top:189px;font-size:14.75px;line-height:16px;color:#222;transform:scaleX(0.6974);-webkit-text-stroke:0.22px;">of</span>
<span class="t" style="left:1390px;top:188px;font-size:15.5px;line-height:17px;color:#111;font-weight:700;transform:scaleX(0.4293);-webkit-text-stroke:0.3px;">1</span>
<div style="left:784.2px;top:228px;width:640.2px;height:618px;background:#fff;"></div>
<div style="left:1409.4px;top:229.6px;width:14.8px;height:616.2px;background:#fff;border:1px solid #bdc3c7;box-sizing:border-box;"></div>
<div style="left:784.2px;top:844.8px;width:640px;height:1px;background:#bdc3c7;"></div>
<div style="left:1409.7px;top:245.8px;width:14.2px;height:1px;background:#bdc3c7;"></div>
<div style="left:1409.7px;top:325.4px;width:14.2px;height:1px;background:#bdc3c7;"></div>
<div style="left:1409.7px;top:393.4px;width:14.2px;height:1px;background:#bdc3c7;"></div>
<svg style="left:1412.7px;top:257.9px;" width="8.4" height="9" viewBox="0 0 8.4 9" preserveAspectRatio="none"><g><rect x="0.2" y="0" width="1.1" height="9" fill="#7c7660"/><rect x="2.5" y="0" width="1.1" height="9" fill="#667a74"/><rect x="4.800" y="0" width="1.100" height="9" fill="#6c6c80"/><rect x="7.100" y="0" width="1.100" height="9" fill="#7c6c6c"/></g></svg>
<span class="t" style="left:0;top:0;font-size:11px;color:#222;transform:translate(1412.95px,273.9px) rotate(90deg) scale(0.9999,0.8325) translate(-0px,-9.32px);">Columns</span>
<svg style="left:1413.1px;top:338.5px;" width="7.6" height="9.8" viewBox="0 0 7.6 9.8" preserveAspectRatio="none"><path d="M0.600 0.700L7 4.500L2.600 8.900Z" fill="none" stroke="#333" stroke-width="1.05" stroke-linejoin="round"/></svg>
<span class="t" style="left:0;top:0;font-size:11px;color:#222;transform:translate(1412.95px,355.9px) rotate(90deg) scale(0.9552,0.8325) translate(-0px,-9.32px);">Filters</span>
<div style="left:783.1px;top:225.7px;width:626.2px;height:69.3px;background:#e8121a;"></div>
<div style="left:785.5px;top:228.4px;width:621.5px;height:64.1px;background:#fff;"></div>
<div style="left:785.5px;top:228.4px;width:621.5px;height:33.4px;background:#d3d3d3;"></div>
<div style="left:785.6px;top:260.9px;width:621.3px;height:1px;background:#bdc3c7;"></div>
<div style="left:785.6px;top:287.8px;width:621.3px;height:1px;background:#dde0e2;"></div>
<div style="left:940.7px;top:239px;width:1px;height:14.4px;background:#c4c8ca;"></div>
<div style="left:1095.7px;top:239px;width:1px;height:14.4px;background:#c4c8ca;"></div>
<div style="left:1251.2px;top:239px;width:1px;height:14.4px;background:#c4c8ca;"></div>
<span class="t" style="left:794.5px;top:241px;font-size:11.5px;line-height:12px;color:#4c4c4c;transform:scaleX(0.7060);">User Email</span>
<span class="t" style="left:950px;top:241px;font-size:11.5px;line-height:12px;color:#4c4c4c;transform:scaleX(0.6700);">Rank</span>
<svg style="left:0;top:0" width="1440" height="900" viewBox="0 0 1440 900"><path d="M977.5 242.400V250M974.900 247.300L977.500 250.100L980.100 247.300" fill="none" stroke="#666" stroke-width="1"/></svg>
<span class="t" style="left:1105px;top:241px;font-size:11.5px;line-height:12px;color:#4c4c4c;transform:scaleX(0.7116);">Status</span>
<span class="t" style="left:1260.8px;top:241px;font-size:11.5px;line-height:12px;color:#4c4c4c;transform:scaleX(0.7709);">Modified Date</span>
<span class="t" style="left:803px;top:270px;font-size:11.5px;line-height:12px;color:#222;transform:scaleX(0.5643);">ERR</span>
<div style="left:785.2px;top:823.2px;width:624.2px;height:21.6px;background:#f1f1f1;"></div>
<svg style="left:790.7px;top:829.8px;" width="4.3" height="9" viewBox="0 0 5 10" preserveAspectRatio="none"><path d="M5 0v10L0 5z" fill="#a3a3a3"/></svg>
<svg style="left:1399px;top:829.8px;" width="4.3" height="9" viewBox="0 0 5 10" preserveAspectRatio="none"><path d="M0 0v10l5-5z" fill="#8a8a8a"/></svg>
<div style="left:1395px;top:817.1px;width:7.2px;height:10.4px;border-radius:50%;background:rgba(40,172,196,0.68);"></div>
<div style="left:1407.2px;top:824.3px;width:9.8px;height:12.8px;border-radius:50%;background:rgba(40,172,196,0.72);"></div>
<div style="left:1412.1px;top:841.7px;width:10.6px;height:14.2px;border-radius:50%;background:rgba(40,172,196,0.72);"></div>
<div style="left:1408.1px;top:862px;width:8px;height:10.6px;border-radius:50%;background:rgba(40,172,196,0.5);"></div>
<div style="left:1382.7px;top:827.3px;width:4.8px;height:6.8px;border-radius:50%;background:rgba(40,172,196,0.5);"></div>
<div style="left:1378.3px;top:848.2px;width:1.4px;height:1.6px;border-radius:50%;background:rgba(40,172,196,0.45);"></div>
<div style="left:0px;top:56.8px;width:1440px;height:11.2px;background:linear-gradient(180deg,rgba(0,0,0,.14) 0%,rgba(0,0,0,.17) 18%,rgba(0,0,0,.09) 38%,rgba(0,0,0,.04) 58%,rgba(0,0,0,.013) 78%,rgba(0,0,0,0) 100%);"></div>
<div style="left:0px;top:0px;width:1440px;height:56.9px;background:#00000e;"></div>
<div style="left:0px;top:0px;width:1440px;height:55.7px;background:#011a33;"></div>
<svg style="left:48px;top:12px;" width="21" height="25" viewBox="0 0 21 25" preserveAspectRatio="none">
<path d="M10.100 1.700L1.300 21.300L10.100 15.700z" fill="#e8452c"/>
<path d="M10.100 1.700L19.200 21.300L10.100 15.700z" fill="#1fa85a"/>
<path d="M10.100 15.700L1.300 21.300L2.300 23.500H18.300L19.200 21.300z" fill="#1a73e8"/>
</svg>
<span class="t" style="left:70.2px;top:9px;font-size:28.5px;line-height:32px;color:#fff;font-weight:700;transform:scaleX(0.6593);-webkit-text-stroke:.7px #fff;">akaun</span>
<div style="left:1399px;top:7.7px;width:28px;height:38.5px;background:#fff;border-radius:50%;overflow:hidden;"></div>
<svg style="left:1399px;top:7.700px;clip-path:ellipse(13.6px 18.800px at 14px 19.250px)" width="28" height="38.5" viewBox="0 0 28 38.5"><g stroke-width="1"><path d="M3.6 8V32" stroke="#e6e9f4" stroke-width="2.6"/><path d="M7.500 10h8" stroke="#d8d8d8"/><path d="M7.500 16h9.500" stroke="#e2d9d2"/><path d="M7.500 22h6" stroke="#e4d8d0"/><path d="M7.500 27h2.800" stroke="#dcdcdc"/><path d="M7.500 32.5h2" stroke="#bcd4f4"/><path d="M1.800 12.200h1.600" stroke="#f08080"/></g></svg>
</div></body></html>
